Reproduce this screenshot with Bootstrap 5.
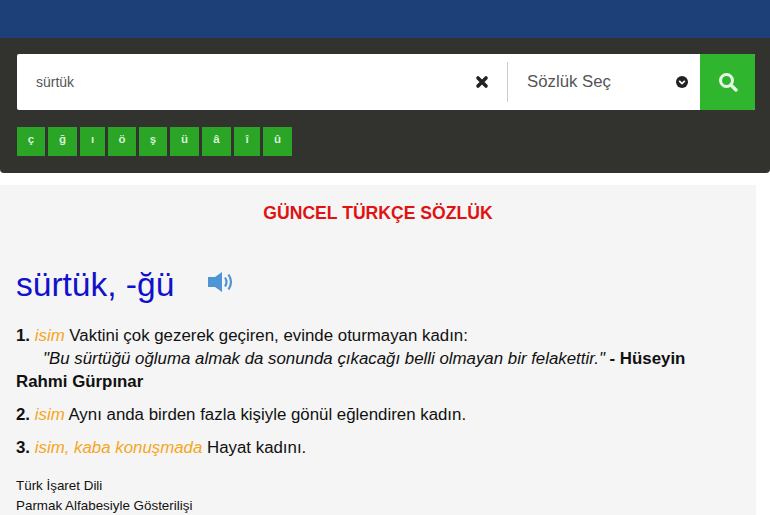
<!DOCTYPE html>
<html lang="tr">
<head>
    <meta charset="UTF-8">
    <meta name="viewport" content="width=device-width, initial-scale=1.0">
    <title>Güncel Türkçe Sözlük</title>
    <link rel="stylesheet" href="https://cdn.jsdelivr.net/npm/bootstrap@5.3.0/dist/css/bootstrap.min.css">
    <style>
        html, body {
            height: 515px;
            overflow: hidden;
        }
        body {
            background-color: #fff;
            font-family: "Liberation Sans", Arial, sans-serif;
            color: #111;
        }
        .top-strip {
            height: 38px;
            background-color: #1d4079;
        }
        .search-panel {
            height: 135px;
            background-color: #32332e;
            padding: 16px 15px 0 17px;
            border-radius: 0 0 4px 4px;
        }
        .search-row {
            width: 738px;
            height: 56px;
            background-color: #fff;
            border-radius: 2px;
        }
        .word-input {
            width: 440px;
            border: 0;
            outline: 0;
            padding: 0 19px;
            font-size: 14px;
            color: #555;
            font-family: inherit;
            background: transparent;
        }
        .clear-box {
            width: 50px;
        }
        .dict-select {
            width: 193px;
            height: 40px;
            border-left: 1px solid #ccc;
            padding: 0 12px 0 19px;
            font-size: 16.8px;
            color: #555;
        }
        .search-btn {
            width: 55px;
            background-color: #30b52f;
            border-radius: 0 2px 2px 0;
        }
        .char-row {
            margin-top: 17px;
            gap: 3px;
        }
        .char-btn {
            height: 29px;
            background-color: #2aa526;
            color: #d8efd6;
            font-size: 11.5px;
            font-weight: 700;
            padding: 0 0 4px;
        }
        .dict-panel {
            width: 756px;
            height: 330px;
            margin-top: 12px;
            padding: 0 16px;
            background-color: #f5f5f5;
        }
        .dict-title {
            color: #e01212;
            font-size: 17.6px;
            font-weight: 700;
            padding-top: 19px;
            line-height: 18px;
            margin: 0;
        }
        .entry-word {
            color: #1111cc;
            font-size: 33.5px;
            font-weight: 400;
            line-height: 40px;
            margin: 0;
        }
        .entry-head {
            margin-top: 43px;
            gap: 34px;
        }
        .speaker-icon {
            margin-bottom: 7px;
        }
        .sense {
            font-size: 16.85px;
            line-height: 23px;
            margin: 0 0 10px;
        }
        .sense-first {
            margin-top: 19px;
        }
        .sense-tag {
            color: #f5a623;
            font-style: italic;
        }
        .sense-quote {
            padding-left: 27px;
        }
        .extra-links {
            font-size: 13.4px;
            line-height: 20px;
            margin-top: 17px;
        }
    </style>
</head>
<body>
    <div class="top-strip"></div>

    <div class="search-panel">
        <div class="search-row d-flex">
            <input class="word-input" type="text" value="sürtük">
            <div class="clear-box d-flex align-items-center justify-content-center">
                <svg width="14" height="14" viewBox="0 0 14 14"><path d="M3 3 L11 11 M11 3 L3 11" stroke="#222" stroke-width="3.6" stroke-linecap="round"/></svg>
            </div>
            <div class="d-flex align-items-center">
                <div class="dict-select d-flex align-items-center justify-content-between">
                    <span>Sözlük Seç</span>
                    <svg width="12" height="12" viewBox="0 0 12 12"><circle cx="6" cy="6" r="6" fill="#222"/><path d="M3.2 4.8 L6 7.6 L8.8 4.8" fill="none" stroke="#fff" stroke-width="1.7"/></svg>
                </div>
            </div>
            <div class="search-btn d-flex align-items-center justify-content-center">
                <svg width="20" height="20" viewBox="0 0 20 20"><circle cx="8.5" cy="8.5" r="6" fill="none" stroke="#e4f6e3" stroke-width="3"/><path d="M13 13 L18 18" stroke="#e4f6e3" stroke-width="3.4" stroke-linecap="round"/></svg>
            </div>
        </div>
        <div class="char-row d-flex">
            <div class="char-btn d-flex align-items-center justify-content-center" style="width:28px">ç</div>
            <div class="char-btn d-flex align-items-center justify-content-center" style="width:29px">ğ</div>
            <div class="char-btn d-flex align-items-center justify-content-center" style="width:25px">ı</div>
            <div class="char-btn d-flex align-items-center justify-content-center" style="width:28px">ö</div>
            <div class="char-btn d-flex align-items-center justify-content-center" style="width:28px">ş</div>
            <div class="char-btn d-flex align-items-center justify-content-center" style="width:29px">ü</div>
            <div class="char-btn d-flex align-items-center justify-content-center" style="width:29px">â</div>
            <div class="char-btn d-flex align-items-center justify-content-center" style="width:26px">î</div>
            <div class="char-btn d-flex align-items-center justify-content-center" style="width:29px">û</div>
        </div>
    </div>

    <div class="dict-panel">
        <h2 class="dict-title text-center">GÜNCEL TÜRKÇE SÖZLÜK</h2>
        <div class="entry-head d-flex align-items-center">
            <h1 class="entry-word">sürtük, -ğü</h1>
            <svg class="speaker-icon" width="27" height="22" viewBox="0 0 27 22"><path d="M0 6 H7 L14 1 V21 L7 16 H0 Z" fill="#4f94d4"/><path d="M17 6.5 Q20 11 17 15.5 M20.5 3.5 Q25.5 11 20.5 18.5" fill="none" stroke="#4f94d4" stroke-width="2.2"/></svg>
        </div>
        <p class="sense sense-first"><b>1.</b> <span class="sense-tag">isim</span> Vaktini çok gezerek geçiren, evinde oturmayan kadın:<br>
            <span class="sense-quote"><i>"Bu sürtüğü oğluma almak da sonunda çıkacağı belli olmayan bir felakettir."</i> <b>- Hüseyin</b></span><br>
            <b>Rahmi Gürpınar</b></p>
        <p class="sense"><b>2.</b> <span class="sense-tag">isim</span> Aynı anda birden fazla kişiyle gönül eğlendiren kadın.</p>
        <p class="sense"><b>3.</b> <span class="sense-tag">isim, kaba konuşmada</span> Hayat kadını.</p>
        <div class="extra-links">
            <div>Türk İşaret Dili</div>
            <div>Parmak Alfabesiyle Gösterilişi</div>
        </div>
    </div>
    <script src="https://cdn.jsdelivr.net/npm/bootstrap@5.3.0/dist/js/bootstrap.bundle.min.js"></script>
</body>
</html>
